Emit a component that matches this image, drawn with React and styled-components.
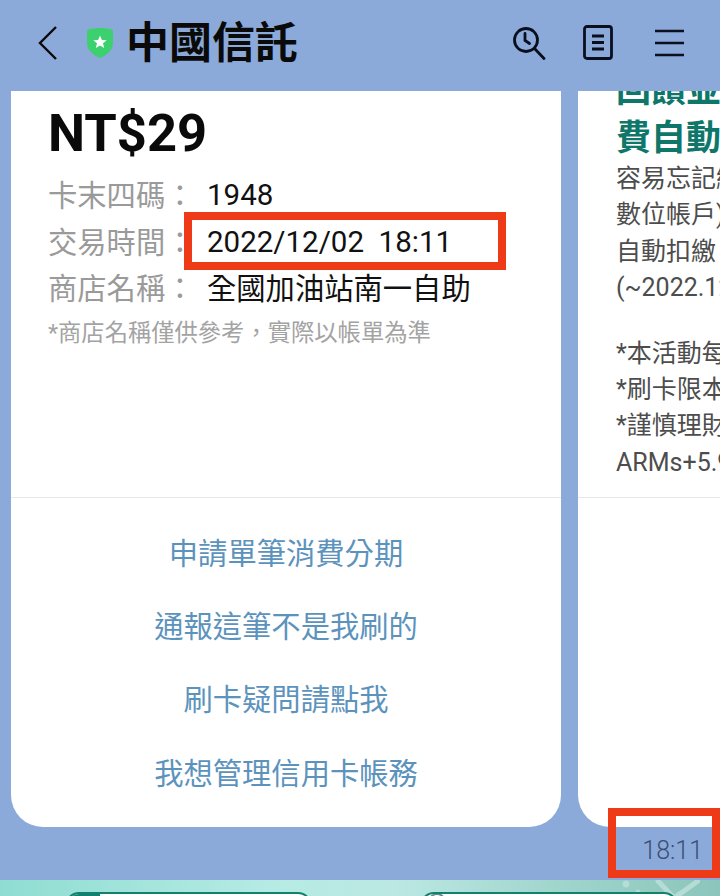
import React from "react";
import styled, { createGlobalStyle } from "styled-components";

const Global = createGlobalStyle`
  html, body { margin: 0; padding: 0; background: #8baad9; }
  * { box-sizing: border-box; }
`;

const FONT = `Roboto, "Noto Sans CJK TC", sans-serif`;

const Screen = styled.div`
  position: relative;
  width: 720px;
  height: 896px;
  overflow: hidden;
  display: flex;
  flex-direction: column;
  background: #8baad9;
  font-family: ${FONT};
`;

const Header = styled.header`
  height: 91px;
  flex: none;
  display: flex;
  align-items: center;
  padding: 0 36px 6px 37px;
`;

const IconSlot = styled.span`
  display: flex;
  flex: none;
  margin-left: ${(p) => p.$ml || 0}px;
`;

const Title = styled.h1`
  margin: 0 0 0 12px;
  font-size: 43px;
  line-height: 50px;
  font-weight: 700;
  color: #0a0a0a;
  font-family: ${FONT};
  flex: 1;
`;

const Carousel = styled.div`
  height: 736px;
  flex: none;
  display: flex;
  gap: 17px;
  padding-left: 11px;
`;

const Card = styled.section`
  flex: none;
  width: ${(p) => p.$w}px;
  background: #fff;
  border-radius: 0 0 32px 32px;
  overflow: hidden;
  display: flex;
  flex-direction: column;
`;

const Body = styled.div`
  height: 407px;
  flex: none;
  border-bottom: 1px solid #e8e8e8;
  overflow: hidden;
`;

const PrimaryBody = styled(Body)`
  padding: 13px 0 0 37px;
`;

const Amount = styled.div`
  font-size: 52.5px;
  line-height: 58px;
  font-weight: 700;
  color: #0a0a0a;
  margin-bottom: 8px;
`;

const Row = styled.div`
  display: flex;
  height: 46.5px;
  align-items: center;
  font-size: 29.3px;
  white-space: pre;
`;

const Label = styled.span`
  width: 159px;
  color: #9a9a9a;
  flex: none;
`;

const Value = styled.span`
  color: #111;
  font-size: ${(p) => (p.$num ? 29.5 : 29.3)}px;
  padding-top: ${(p) => (p.$num ? 4 : 0)}px;
`;

const Note = styled.div`
  font-size: 23.3px;
  line-height: 46px;
  color: #a3a3a3;
  white-space: nowrap;
`;

const Actions = styled.div`
  padding-top: 16px;
  display: flex;
  flex-direction: column;
`;

const Action = styled.a`
  height: 73.3px;
  display: flex;
  align-items: center;
  justify-content: center;
  font-size: 29.3px;
  color: #5c93bd;
`;

const PromoBody = styled(Body)`
  padding: 0 0 0 38px;
  white-space: nowrap;
`;

const PromoTitle = styled.div`
  font-size: 35px;
  line-height: ${(p) => p.$lh}px;
  font-weight: 700;
  color: #0f7769;
  margin-top: ${(p) => p.$mt}px;
`;

const PromoLine = styled.div`
  font-size: 25px;
  line-height: 36.4px;
  color: #4d4d4d;
`;

const Gap = styled.div`
  height: 29px;
`;

const Meta = styled.div`
  height: 53px;
  flex: none;
  display: flex;
  justify-content: flex-end;
  align-items: center;
  padding: 0 17px 6px 0;
`;

const Time = styled.span`
  font-size: 25px;
  font-weight: 300;
  color: #3a4e74;
`;

const Footer = styled.footer`
  position: relative;
  flex: 1;
  display: flex;
  gap: 108px;
  padding: 12px 0 0 65px;
  background: linear-gradient(90deg, #8fddd2 0%, #b6ebe4 38%, #bbe8e2 55%, #9dd3ca 80%, #8cc5bb 100%);
`;

const Pill = styled.div`
  position: relative;
  flex: none;
  width: ${(p) => p.$w}px;
  height: 30px;
  border: 2.500px solid #12806f;
  border-radius: 14px;
  background: #fff;
  overflow: hidden;
`;

const PillCap = styled.span`
  display: block;
  width: ${(p) => p.$w}px;
  height: 100%;
  background: #12806f;
`;

const PillDot = styled.span`
  display: block;
  width: 18px;
  height: 18px;
  margin: -1px 0 0 6px;
  border: 2px solid #5d8f88;
  border-radius: 50%;
`;

const Coral = styled.svg`
  position: absolute;
  right: 20px;
  top: 0;
`;

const Highlight = styled.div`
  position: absolute;
  left: ${(p) => p.$x}px;
  top: ${(p) => p.$y}px;
  width: ${(p) => p.$w}px;
  height: ${(p) => p.$h}px;
  border: 8px solid #ef3a17;
`;

const Back = () => (
  <svg width="22" height="36" viewBox="0 0 22 36" fill="none" stroke="#0a0a0a" strokeWidth="2.400">
    <path d="M19 2 3 18l16 16" />
  </svg>
);

const Shield = () => (
  <svg width="28" height="32" viewBox="0 0 28 32">
    <path d="M2.500 2.500C6 1.500 10 1 14 1s8 .5 11.500 1.500c1 .3 1.500 1 1.500 2V16c0 7-6 12-13 15C7 28 1 23 1 16V4.500c0-1 .5-1.700 1.500-2z" fill="#3dd06f" />
    <path d="m14 8.500 1.900 4.400 4.800.4-3.700 3 1.200 4.700-4.200-2.600-4.200 2.600 1.200-4.700-3.700-3 4.800-.4z" fill="#fff" />
  </svg>
);

const ClockSearch = () => (
  <svg width="34" height="34" viewBox="0 0 34 34" fill="none" stroke="#0a0f1e" strokeWidth="2.800" strokeLinecap="round">
    <circle cx="14" cy="14" r="11.500" />
    <path d="M13 7.500V14.500l4.500 3" />
    <path d="m23 23 9 9.500" />
  </svg>
);

const Doc = () => (
  <svg width="30" height="36" viewBox="0 0 30 36" fill="none" stroke="#0a0f1e" strokeWidth="2.800">
    <rect x="1.500" y="1.500" width="27" height="32" rx="2.500" />
    <path d="M9 11h12M9 17.500h12M9 24h12" />
  </svg>
);

const Menu = () => (
  <svg width="30" height="28" viewBox="0 0 30 28" fill="none" stroke="#0a0f1e" strokeWidth="2.400">
    <path d="M1 2h29M1 14h29M1 26h29" />
  </svg>
);

const CoralArt = () => (
  <Coral width="80" height="16" viewBox="0 0 80 16" fill="none" stroke="#b5dcd5" strokeWidth="5" strokeLinecap="round">
    <circle cx="6" cy="4" r="3.500" fill="#b5dcd5" stroke="none" />
    <circle cx="18" cy="12" r="2.500" fill="#b5dcd5" stroke="none" />
    <path d="M38 1 54 18M78 1 54 18" />
  </Coral>
);

const rows = [
  { label: "卡末四碼：", value: "1948", num: true },
  { label: "交易時間：", value: "2022/12/02  18:11", num: true },
  { label: "商店名稱：", value: "全國加油站南一自助" },
];

const actions = ["申請單筆消費分期", "通報這筆不是我刷的", "刷卡疑問請點我", "我想管理信用卡帳務"];

const promoTop = ["容易忘記繳費嗎", "數位帳戶)", "自動扣繳", "(~2022.12.31)"];
const promoBottom = ["*本活動每", "*刷卡限本", "*謹慎理財", "ARMs+5.9"];

export default function App() {
  return (
    <Screen>
      <Global />
      <Header>
        <IconSlot><Back /></IconSlot>
        <IconSlot $ml={27}><Shield /></IconSlot>
        <Title>中國信託</Title>
        <IconSlot><ClockSearch /></IconSlot>
        <IconSlot $ml={37}><Doc /></IconSlot>
        <IconSlot $ml={41}><Menu /></IconSlot>
      </Header>
      <Carousel>
        <Card $w={550}>
          <PrimaryBody>
            <Amount>NT$29</Amount>
            {rows.map((r) => (
              <Row key={r.label}>
                <Label>{r.label}</Label>
                <Value $num={r.num}>{r.value}</Value>
              </Row>
            ))}
            <Note>*商店名稱僅供參考，實際以帳單為準</Note>
          </PrimaryBody>
          <Actions>
            {actions.map((a) => (
              <Action key={a}>{a}</Action>
            ))}
          </Actions>
        </Card>
        <Card $w={300}>
          <PromoBody>
            <PromoTitle $mt={-24} $lh={47}>回饋並</PromoTitle>
            <PromoTitle $mt={3} $lh={44}>費自動</PromoTitle>
            <PromoLine>{promoTop[0]}</PromoLine>
            <PromoLine>{promoTop[1]}</PromoLine>
            <PromoLine>{promoTop[2]}</PromoLine>
            <PromoLine>{promoTop[3]}</PromoLine>
            <Gap />
            {promoBottom.map((l) => (
              <PromoLine key={l}>{l}</PromoLine>
            ))}
          </PromoBody>
        </Card>
      </Carousel>
      <Meta>
        <Time>18:11</Time>
      </Meta>
      <Footer>
        <CoralArt />
        <Pill $w={247}><PillCap $w={33} /></Pill>
        <Pill $w={258}><PillDot /></Pill>
      </Footer>
      <Highlight $x={184} $y={212} $w={322} $h={58} />
      <Highlight $x={608} $y={808} $w={112} $h={70} />
    </Screen>
  );
}
